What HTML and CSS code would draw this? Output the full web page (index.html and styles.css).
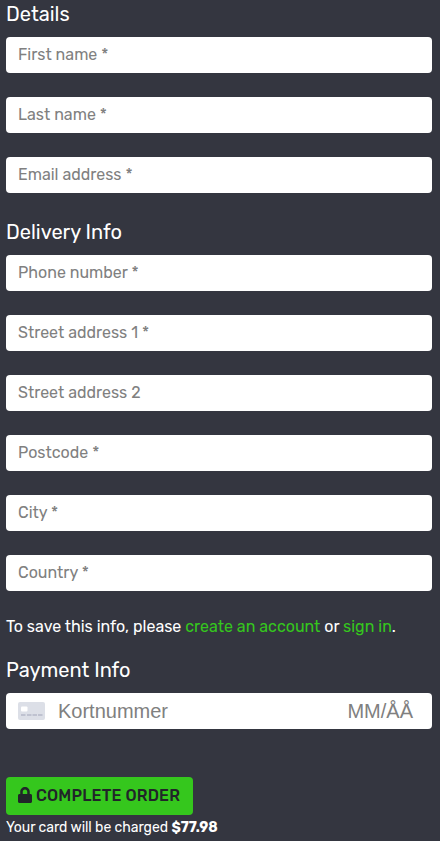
FILE: index.html
```html
<!DOCTYPE html>
<html lang="en">
<head>
<meta charset="utf-8">
<title>Checkout</title>
<link rel="stylesheet" href="styles.css">
</head>
<body>
<form class="checkout">
  <h5 class="heading">Details</h5>
  <input class="field" type="text" placeholder="First name *">
  <input class="field" type="text" placeholder="Last name *">
  <input class="field" type="text" placeholder="Email address *">
  <h5 class="heading">Delivery Info</h5>
  <input class="field" type="text" placeholder="Phone number *">
  <input class="field" type="text" placeholder="Street address 1 *">
  <input class="field" type="text" placeholder="Street address 2">
  <input class="field" type="text" placeholder="Postcode *">
  <input class="field" type="text" placeholder="City *">
  <input class="field" type="text" placeholder="Country *">
  <p class="save">To save this info, please <a class="link">create an account</a> or <a class="link">sign in</a>.</p>
  <h5 class="heading">Payment Info</h5>
  <div class="card">
    <svg class="card-icon" width="27" height="18" viewBox="0 0 27 18">
      <rect width="27" height="18" rx="2" fill="#dcdfe7"/>
      <rect x="3" y="4.500" width="6.500" height="5" rx="1" fill="#fff"/>
      <path d="M3 13h4.500M9 13h4.500M14.500 13h4.500M20 13h4.500" stroke="#b5b9c9" stroke-width="1.600"/>
    </svg>
    <span class="number">Kortnummer</span>
    <span class="expiry">MM/ÅÅ</span>
  </div>
  <button class="submit" type="button">
    <svg class="lock" width="14" height="16" viewBox="0 0 448 512"><path fill="currentColor" d="M400 224h-24v-72C376 68.200 307.800 0 224 0S72 68.200 72 152v72H48c-26.500 0-48 21.500-48 48v192c0 26.500 21.500 48 48 48h352c26.500 0 48-21.500 48-48V272c0-26.500-21.500-48-48-48zm-104 0H152v-72c0-39.700 32.300-72 72-72s72 32.300 72 72v72z"/></svg>
    <span>COMPLETE ORDER</span>
  </button>
  <p class="charge">Your card will be charged <strong>$77.98</strong></p>
</form>
</body>
</html>
```

FILE: styles.css
```css
* { box-sizing: border-box; }
body {
  margin: 0;
  height: 841px;
  overflow: hidden;
  background: #343640;
  color: #fff;
  font: 16px/24px Rubik, Roboto, sans-serif;
}
.checkout {
  display: flow-root;
  margin-top: -1px;
  padding: 0 8px 0 6px;
}
.heading {
  margin: 0 0 8px;
  font-size: 20px;
  font-weight: 400;
  line-height: 30px;
}
.field {
  display: block;
  width: 100%;
  height: 36px;
  margin: 0 0 24px;
  padding: 0 12px 2px;
  border: 0;
  border-radius: 4px;
  background: #fff;
  font: inherit;
}
.field::placeholder { color: #808080; opacity: 1; }
.save { margin: 0 0 16px; letter-spacing: -0.005px; white-space: nowrap; }
.link { color: #35c71d; }
.card {
  display: flex;
  align-items: center;
  height: 36px;
  margin-bottom: 48px;
  padding: 0 19px 0 12px;
  border-radius: 4px;
  background: #fff;
  color: #808080;
  font: 20px/24px "Liberation Sans", sans-serif;
}
.number { margin-left: 13px; }
.expiry { margin-left: auto; }
.submit {
  display: flex;
  align-items: center;
  gap: 4px;
  width: 187px;
  height: 38px;
  padding: 0 12px;
  border: 0;
  border-radius: 4px;
  background: #35c71d;
  color: #212529;
  font: 500 16px/24px Rubik, Roboto, sans-serif;
  letter-spacing: 0.15px;
  white-space: nowrap;
}
.lock { margin-bottom: 2px; }
.charge {
  margin: 2px 0 0;
  font-size: 14px;
  line-height: 21px;
  letter-spacing: -0.04px;
  white-space: nowrap;
}
```
